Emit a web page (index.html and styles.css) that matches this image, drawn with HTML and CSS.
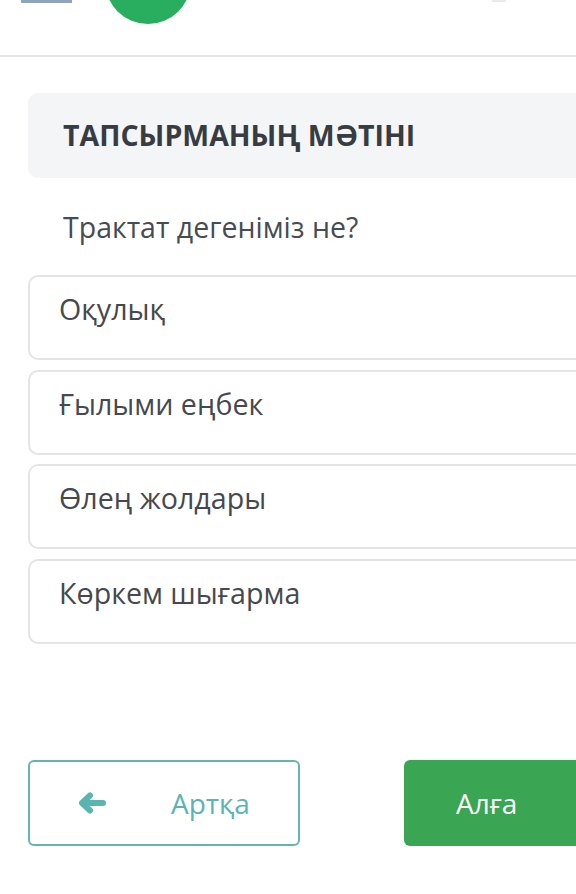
FILE: index.html
```html
<!DOCTYPE html>
<html lang="kk">
<head>
<meta charset="utf-8">
<link rel="stylesheet" href="styles.css">
</head>
<body>
<header class="topbar">
  <div class="burger"><span></span><span></span><span></span></div>
  <div class="avatar"></div>
  <div class="tick"></div>
</header>
<main class="content">
  <div class="task-head">ТАПСЫРМАНЫҢ МӘТІНІ</div>
  <div class="question">Трактат дегеніміз не?</div>
  <div class="options">
    <div class="option">Оқулық</div>
    <div class="option">Ғылыми еңбек</div>
    <div class="option">Өлең жолдары</div>
    <div class="option">Көркем шығарма</div>
  </div>
  <div class="nav">
    <button class="btn btn-back">
      <svg class="arrow" width="30" height="22" viewBox="0 0 30 22"><path d="M26 11H6M13 3.5L5 11l8 7.5" fill="none" stroke="#5ab5b0" stroke-width="6" stroke-linecap="round" stroke-linejoin="round"/></svg>
      <span>Артқа</span>
    </button>
    <button class="btn btn-next">Алға</button>
  </div>
</main>
</body>
</html>
```

FILE: styles.css
```css
html, body {
  margin: 0;
  padding: 0;
  background: #ffffff;
  overflow: hidden;
  font-family: "Open Sans", "Noto Sans", sans-serif;
}

.topbar {
  height: 55px;
  border-bottom: 2px solid #e6e6e6;
  display: flex;
  align-items: flex-start;
  overflow: hidden;
}

.burger {
  margin-left: 21px;
  margin-top: -22px;
  width: 51px;
  display: flex;
  flex-direction: column;
  gap: 8px;
}

.burger span {
  display: block;
  height: 3px;
  background: #8fa3ba;
}

.avatar {
  margin-left: 33px;
  margin-top: -62px;
  width: 86px;
  height: 86px;
  border-radius: 50%;
  background: #28ae5e;
}

.tick {
  margin-left: auto;
  margin-right: 70px;
  width: 14px;
  height: 2px;
  background: #e8eaec;
}

.content {
  padding-left: 28px;
  padding-top: 36px;
}

.task-head {
  height: 85px;
  background: #f3f5f7;
  border-radius: 10px 0 0 10px;
  padding-left: 35px;
  padding-bottom: 2px;
  box-sizing: border-box;
  display: flex;
  align-items: center;
  font-weight: 700;
  font-size: 28.5px;
  color: #373c42;
}

.question {
  height: 97px;
  padding-left: 35px;
  display: flex;
  align-items: center;
  font-size: 28.5px;
  color: #474c52;
}

.options {
  display: flex;
  flex-direction: column;
  gap: 9.5px;
}

.option {
  box-sizing: border-box;
  height: 85px;
  border: 2px solid #e4e4e4;
  border-right: none;
  border-radius: 10px 0 0 10px;
  padding: 12px 0 0 29px;
  font-size: 28.6px;
  color: #45494e;
}

.nav {
  margin-top: 116px;
  display: flex;
  gap: 104px;
}

.btn {
  height: 86px;
  box-sizing: border-box;
  font-family: "Open Sans", "Noto Sans", sans-serif;
  font-size: 28px;
  display: flex;
  align-items: center;
  padding: 0;
  cursor: pointer;
}

.btn-back {
  flex: 0 0 272px;
  border-radius: 6px;
  background: #ffffff;
  border: 2px solid #64b4b4;
  color: #5ab5b0;
}

.btn-back .arrow {
  margin-left: 47px;
  margin-right: 64px;
}

.btn-next {
  flex: 1 1 auto;
  border-radius: 6px 0 0 6px;
  background: #3aa552;
  border: none;
  color: #ffffff;
  padding-left: 52px;
}
```
